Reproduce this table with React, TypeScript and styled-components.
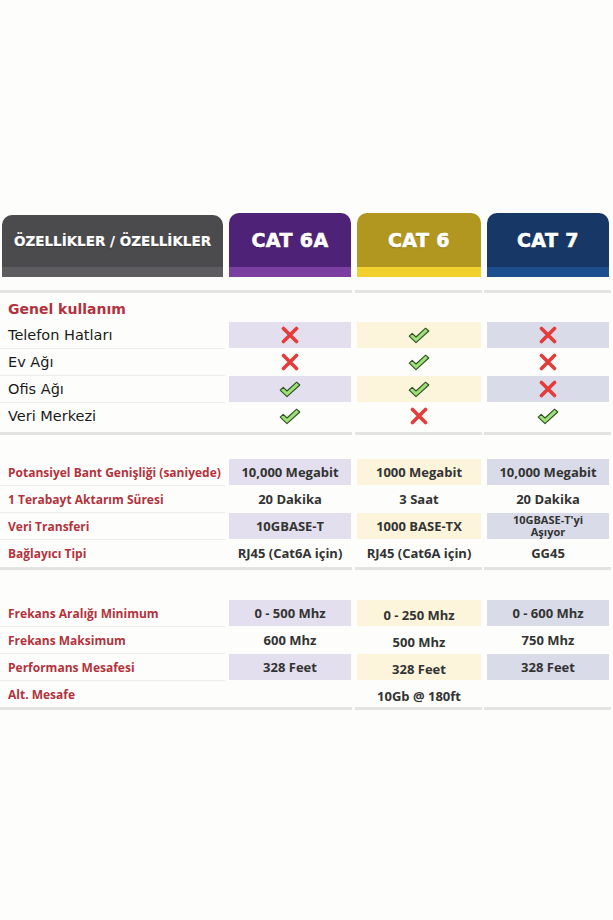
import React from "react";
import styled, { createGlobalStyle } from "styled-components";

const Global = createGlobalStyle`
  html, body { margin: 0; padding: 0; background: #fdfefc; }
  body { font-family: "DejaVu Sans", "Open Sans", sans-serif; }
  * { box-sizing: border-box; }
`;

const COLS = "221px 122px 124px 122px";

const Page = styled.div`
  width: 613px;
  height: 920px;
  padding: 213px 0 0 2px;
  background: #fdfefc;
`;

const HeaderRow = styled.div`
  display: grid;
  grid-template-columns: ${COLS};
  column-gap: 6px;
  align-items: end;
`;

const Tab = styled.div<{ $bg: string; $stripe: string; $h: number; $size: number }>`
  height: ${(p) => p.$h}px;
  background: ${(p) => p.$bg};
  box-shadow: inset 0 -10px 0 ${(p) => p.$stripe};
  border-radius: 10px 10px 0 0;
  display: flex;
  align-items: center;
  justify-content: center;
  padding-bottom: 10px;
  color: #fff;
  font-family: "DejaVu Sans", sans-serif;
  font-weight: 700;
  font-size: ${(p) => p.$size}px;
  letter-spacing: ${(p) => (p.$size > 15 ? "0.4px" : "0")};
  text-shadow: 0 1px 1px rgba(0, 0, 0, 0.25);
  -webkit-text-stroke: ${(p) => (p.$size > 15 ? "0.6px #fff" : "0.2px #fff")};
`;

const DividerRow = styled.div<{ $top: number }>`
  display: grid;
  grid-template-columns: ${COLS};
  column-gap: 6px;
  margin-top: ${(p) => p.$top}px;
`;

const DividerSeg = styled.div<{ $col: string; $ml: number; $mr: number }>`
  grid-column: ${(p) => p.$col};
  height: 3px;
  background: #e4e4e4;
  margin-left: ${(p) => p.$ml}px;
  margin-right: ${(p) => p.$mr}px;
`;

const SectionTitle = styled.div`
  height: 26px;
  display: flex;
  align-items: center;
  padding: 5px 0 0 6px;
  color: #b3323c;
  font-weight: 700;
  font-size: 14px;
`;

const Grid = styled.div<{ $top: number }>`
  display: grid;
  grid-template-columns: ${COLS};
  column-gap: 6px;
  grid-auto-rows: 26px;
  row-gap: 1px;
  margin-top: ${(p) => p.$top}px;
`;

const Label = styled.div<{ $red?: boolean; $last?: boolean }>`
  display: flex;
  align-items: center;
  padding-left: 8px;
  margin-left: -2px;
  margin-right: -2px;
  white-space: nowrap;
  color: ${(p) => (p.$red ? "#b3323c" : "#1a1a1a")};
  font-family: ${(p) => (p.$red ? '"Open Sans", sans-serif' : '"DejaVu Sans", sans-serif')};
  font-size: ${(p) => (p.$red ? "12px" : "14.5px")};
  font-weight: ${(p) => (p.$red ? 700 : 400)};
  box-shadow: ${(p) => (p.$last ? "none" : "0 1px 0 #ececec")};
`;

const Cell = styled.div<{ $shade?: string; $shift?: number; $small?: boolean }>`
  display: flex;
  align-items: center;
  justify-content: center;
  text-align: center;
  background: ${(p) => p.$shade || "transparent"};
  color: #333;
  font-family: "Open Sans", sans-serif;
  font-weight: 700;
  font-size: ${(p) => (p.$small ? "11px" : "13px")};
  line-height: ${(p) => (p.$small ? "12px" : "normal")};
  padding-top: ${(p) => p.$shift || 0}px;
  white-space: nowrap;
`;

const Multi = styled.span`
  white-space: pre-line;
`;

const Cross = () => (
  <svg width="18" height="18" viewBox="0 0 18 18">
    <path d="M2.5 2.5 L15.5 15.5 M15.5 2.5 L2.5 15.5" stroke="#e53b3b" strokeWidth="3.6" strokeLinecap="round" />
  </svg>
);

const Check = () => (
  <svg width="22" height="17" viewBox="0 0 22 17">
    <path
      d="M1.2 9.2 L4.2 6.4 L8 10 L17.6 1.2 L20.8 4 L8 15.6 Z"
      fill="#9fe07a"
      stroke="#2e4f22"
      strokeWidth="1.1"
      strokeLinejoin="round"
    />
  </svg>
);

const L6A = "#e3dfee";
const L6 = "#fcf5dc";
const L7 = "#d9dbe8";
const shades = [L6A, L6, L7];

type Mark = "x" | "v";
const usage: [string, Mark, Mark, Mark][] = [
  ["Telefon Hatları", "x", "v", "x"],
  ["Ev Ağı", "x", "v", "x"],
  ["Ofis Ağı", "v", "v", "x"],
  ["Veri Merkezi", "v", "x", "v"],
];

const specs: [string, string, string, string][] = [
  ["Potansiyel Bant Genişliği (saniyede)", "10,000 Megabit", "1000 Megabit", "10,000 Megabit"],
  ["1 Terabayt Aktarım Süresi", "20 Dakika", "3 Saat", "20 Dakika"],
  ["Veri Transferi", "10GBASE-T", "1000 BASE-TX", "10GBASE-T'yi\nAşıyor"],
  ["Bağlayıcı Tipi", "RJ45 (Cat6A için)", "RJ45 (Cat6A için)", "GG45"],
];

const freq: [string, string, string, string][] = [
  ["Frekans Aralığı Minimum", "0 - 500 Mhz", "0 - 250 Mhz", "0 - 600 Mhz"],
  ["Frekans Maksimum", "600 Mhz", "500 Mhz", "750 Mhz"],
  ["Performans Mesafesi", "328 Feet", "328 Feet", "328 Feet"],
  ["Alt. Mesafe", "", "10Gb @ 180ft", ""],
];

const Divider = ({ top }: { top: number }) => (
  <DividerRow $top={top}>
    <DividerSeg $col="1 / span 2" $ml={-2} $mr={-1} />
    <DividerSeg $col="3" $ml={-2} $mr={-1} />
    <DividerSeg $col="4" $ml={-3} $mr={-2} />
  </DividerRow>
);

export default function App() {
  return (
    <>
      <Global />
      <Page>
        <HeaderRow>
          <Tab $bg="#4b4b4d" $stripe="#5d5d61" $h={62} $size={13.5}>
            ÖZELLİKLER / ÖZELLİKLER
          </Tab>
          <Tab $bg="#4e2277" $stripe="#7a3fa1" $h={64} $size={19}>
            CAT 6A
          </Tab>
          <Tab $bg="#b1961f" $stripe="#f1cf2d" $h={64} $size={19}>
            CAT 6
          </Tab>
          <Tab $bg="#173766" $stripe="#1d4f8f" $h={64} $size={19}>
            CAT 7
          </Tab>
        </HeaderRow>

        <Divider top={13} />
        <SectionTitle>Genel kullanım</SectionTitle>
        <Grid $top={3}>
          {usage.map((r, i) => (
            <React.Fragment key={r[0]}>
              <Label $last={i === usage.length - 1}>{r[0]}</Label>
              {[r[1], r[2], r[3]].map((m, j) => (
                <Cell key={j} $shade={i % 2 === 0 ? shades[j] : undefined}>
                  {m === "x" ? <Cross /> : <Check />}
                </Cell>
              ))}
            </React.Fragment>
          ))}
        </Grid>
        <Divider top={3} />

        <Grid $top={24}>
          {specs.map((r, i) => (
            <React.Fragment key={r[0]}>
              <Label $red $last={i === specs.length - 1}>{r[0]}</Label>
              {[r[1], r[2], r[3]].map((v, j) => (
                <Cell key={j} $shade={i % 2 === 0 ? shades[j] : undefined} $small={v.includes("\n")}>
                  <Multi>{v}</Multi>
                </Cell>
              ))}
            </React.Fragment>
          ))}
        </Grid>
        <Divider top={1} />

        <Grid $top={30}>
          {freq.map((r, i) => (
            <React.Fragment key={r[0]}>
              <Label $red $last={i === freq.length - 1}>{r[0]}</Label>
              {[r[1], r[2], r[3]].map((v, j) => (
                <Cell key={j} $shade={i % 2 === 0 && i < 3 ? shades[j] : undefined} $shift={j === 1 ? 3 : 0}>
                  {v}
                </Cell>
              ))}
            </React.Fragment>
          ))}
        </Grid>
        <Divider top={0} />
      </Page>
    </>
  );
}
